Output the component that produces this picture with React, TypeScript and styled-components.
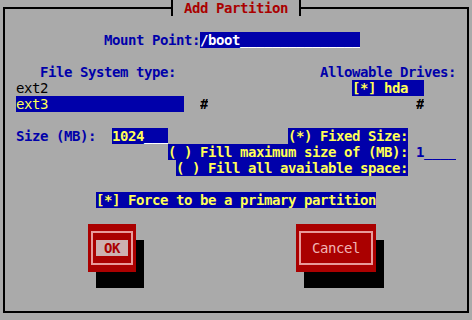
import styled, {createGlobalStyle} from "styled-components";

// newt style text screen: 59 x 20 cells of 8 x 16 px
const GlobalStyle = createGlobalStyle`
  html, body {
    margin: 0;
    padding: 0;
    background: #aaaaaa;
  }
`

const Screen = styled.div`
  display: grid;
  grid-template-columns: repeat(59, 8px);
  grid-template-rows: repeat(20, 16px);
  width: 472px;
  height: 320px;
  background: #aaaaaa;
  font-family: "DejaVu Sans Mono", "Liberation Mono", monospace;
  font-size: 14px;
  line-height: 16px;
  letter-spacing: -0.43px;
  overflow: hidden;
`
const Frame = styled.div`
  grid-column: 1 / -1;
  grid-row: 1 / -1;
  margin: 7px 3px;
  border: 2px solid #000;
`
const TitleBar = styled.div`
  grid-column: 22 / 39;
  grid-row: 1;
  margin: 0 3px;
  border-left: 2px solid #000;
  border-right: 2px solid #000;
  background: #aaaaaa;
  display: flex;
  justify-content: center;
  align-items: center;
  color: #aa0000;
  font-weight: bold;
`

interface CellProps {
    $col: number,
    $row: number,
    $span: number,
}

const Cell = styled.div<CellProps>`
  grid-column: ${p => p.$col + 1} / span ${p => p.$span};
  grid-row: ${p => p.$row + 1};
  white-space: pre;
  overflow: hidden;
`
const Label = styled(Cell)`
  color: #0000aa;
  font-weight: bold;
`
const Entry = styled(Cell)<{$light?: boolean}>`
  background: #0000aa;
  color: ${p => p.$light ? '#ffffff' : '#ffff55'};
  font-weight: bold;
`
const Blank = styled.span`
  color: #ffffff;
`
const PlainEntry = styled(Cell)`
  color: #0000aa;
  font-weight: bold;
`
const ListItem = styled(Cell)<{$selected?: boolean}>`
  background: ${p => p.$selected ? '#0000aa' : 'transparent'};
  color: ${p => p.$selected ? '#ffff55' : '#000000'};
`
const ScrollMark = styled(Cell)`
  color: #000;
  font-weight: bold;
`
const Button = styled.div<{$col: number, $span: number}>`
  grid-column: ${p => p.$col + 1} / span ${p => p.$span};
  grid-row: 15 / span 3;
  background: #aa0000;
  box-shadow: 8px 16px 0 #000;
  padding: 7px 3px;
  display: flex;
`
const ButtonFrame = styled.div`
  flex: 1;
  border: 2px solid #e89a9a;
  display: flex;
  justify-content: center;
  align-items: center;
`
const ButtonLabel = styled.span<{$active?: boolean}>`
  line-height: 16px;
  padding: 0 ${p => p.$active ? '8px' : '0'};
  background: ${p => p.$active ? '#ccb0b0' : 'transparent'};
  color: ${p => p.$active ? '#aa0000' : '#f0b4b4'};
  font-weight: ${p => p.$active ? 'bold' : 'normal'};
`

export default function App() {
    return <>
        <GlobalStyle/>
        <Screen>
            <Frame/>
            <TitleBar>Add Partition</TitleBar>

            <Label $col={13} $row={2} $span={12}>Mount Point:</Label>
            <Entry $col={25} $row={2} $span={20} $light>/boot_______________</Entry>

            <Label $col={5} $row={4} $span={17}>File System type:</Label>
            <Label $col={40} $row={4} $span={17}>Allowable Drives:</Label>

            <ListItem $col={2} $row={5} $span={21}>ext2</ListItem>
            <Entry $col={44} $row={5} $span={9}>[*] hda</Entry>
            <ListItem $col={2} $row={6} $span={21} $selected>ext3</ListItem>
            <ScrollMark $col={25} $row={6} $span={1}>#</ScrollMark>
            <ScrollMark $col={52} $row={6} $span={1}>#</ScrollMark>

            <Label $col={2} $row={8} $span={10}>Size (MB):</Label>
            <Entry $col={14} $row={8} $span={7}>1024<Blank>___</Blank></Entry>
            <Entry $col={36} $row={8} $span={15}>(*) Fixed Size:</Entry>
            <Entry $col={21} $row={9} $span={30}>( ) Fill maximum size of (MB):</Entry>
            <PlainEntry $col={52} $row={9} $span={5}>1____</PlainEntry>
            <Entry $col={22} $row={10} $span={29}>( ) Fill all available space:</Entry>

            <Entry $col={12} $row={12} $span={35}>[*] Force to be a primary partition</Entry>

            <Button $col={11} $span={6}>
                <ButtonFrame><ButtonLabel $active>OK</ButtonLabel></ButtonFrame>
            </Button>
            <Button $col={37} $span={10}>
                <ButtonFrame><ButtonLabel>Cancel</ButtonLabel></ButtonFrame>
            </Button>
        </Screen>
    </>
}
